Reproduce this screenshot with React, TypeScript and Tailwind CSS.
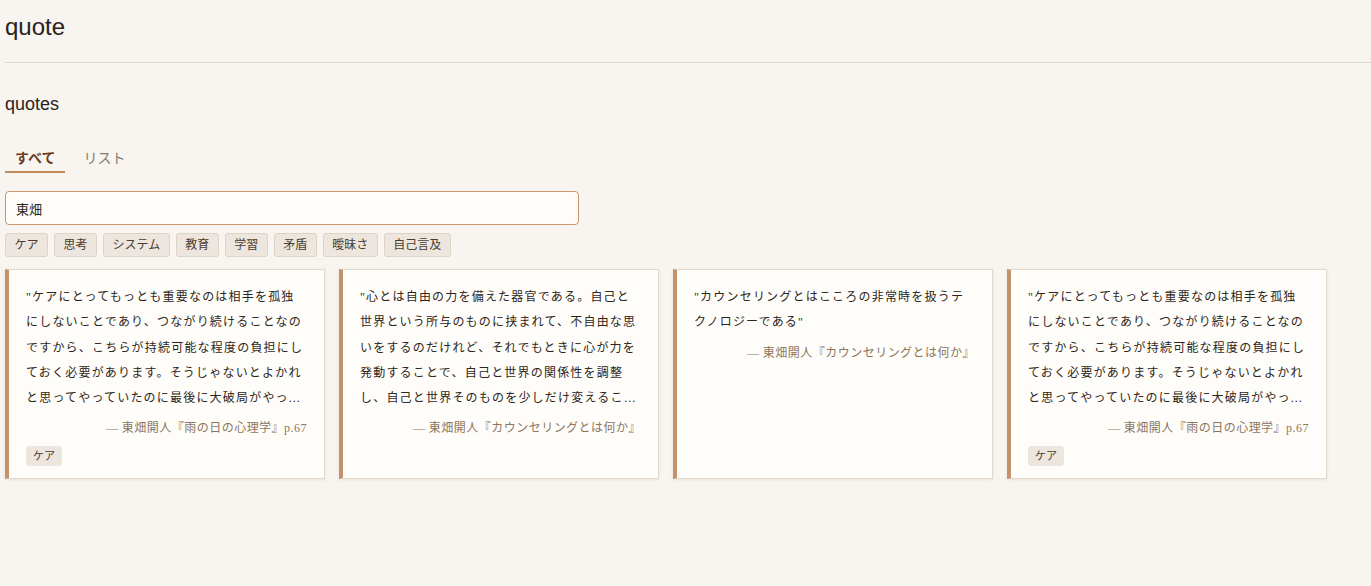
import { useState } from "react";

interface Quote {
  id: number;
  text: string;
  source: string;
  tags: string[];
}

const QUOTES: Quote[] = [
  {
    id: 1,
    text: "ケアにとってもっとも重要なのは相手を孤独にしないことであり、つながり続けることなのですから、こちらが持続可能な程度の負担にしておく必要があります。そうじゃないとよかれと思ってやっていたのに最後に大破局がやってきてしまうからです。",
    source: "— 東畑開人『雨の日の心理学』p.67",
    tags: ["ケア"],
  },
  {
    id: 2,
    text: "心とは自由の力を備えた器官である。自己と世界という所与のものに挟まれて、不自由な思いをするのだけれど、それでもときに心が力を発動することで、自己と世界の関係性を調整し、自己と世界そのものを少しだけ変えることができる。",
    source: "— 東畑開人『カウンセリングとは何か』",
    tags: [],
  },
  {
    id: 3,
    text: "カウンセリングとはこころの非常時を扱うテクノロジーである",
    source: "— 東畑開人『カウンセリングとは何か』",
    tags: [],
  },
  {
    id: 4,
    text: "ケアにとってもっとも重要なのは相手を孤独にしないことであり、つながり続けることなのですから、こちらが持続可能な程度の負担にしておく必要があります。そうじゃないとよかれと思ってやっていたのに最後に大破局がやってきてしまうからです。",
    source: "— 東畑開人『雨の日の心理学』p.67",
    tags: ["ケア"],
  },
];

const TAGS = ["ケア", "思考", "システム", "教育", "学習", "矛盾", "曖昧さ", "自己言及"];

function QuoteCard({ quote }: { quote: Quote }) {
  return (
    <div className="bg-[#fffdf9] border border-[#e2d8cb] border-l-4 border-l-[#c4916a] pl-[17px] pr-[17px] pt-[15px] pb-[12px] shadow-[0_1px_3px_rgba(120,90,60,0.12)]">
      <p className="text-[12px] leading-[25.3px] tracking-[0.1em] text-[#2d2520] line-clamp-5">
        "{quote.text}"
      </p>
      <p className="mt-[8px] text-right text-[12px] leading-[18px] tracking-[0.04em] text-[#8c7660]">
        {quote.source}
      </p>
      {quote.tags.length > 0 && (
        <div className="mt-[9px] flex gap-1.5">
          {quote.tags.map((t) => (
            <span
              key={t}
              className="px-[7px] py-[2px] text-[11px] leading-4 rounded-[3px] bg-[#ece6de] text-[#4a3c30]"
            >
              {t}
            </span>
          ))}
        </div>
      )}
    </div>
  );
}

export default function App() {
  const [tab, setTab] = useState("all");
  const [query, setQuery] = useState("東畑");

  return (
    <div className="min-h-screen bg-[#f8f5f0] text-[#2a211c] [font-family:'Liberation_Serif','Noto_Sans_CJK_JP',serif]">
      {/* Header */}
      <div className="pl-[5px] pt-[11px]">
        <h1 className="text-[24px] leading-8 [font-family:'Liberation_Sans',Arial,sans-serif]">quote</h1>
        <div className="mt-[19px] border-b border-[#e5d8cb]"></div>
      </div>

      <div className="pl-[5px]">
        <h2 className="mt-[27px] text-[18px] leading-7 [font-family:'Liberation_Sans',Arial,sans-serif]">
          quotes
        </h2>

        {/* Tabs */}
        <div className="mt-[23px] flex gap-2">
          <button
            onClick={() => setTab("all")}
            className={
              tab === "all"
                ? "px-[10px] pt-2 pb-[2px] text-[14px] leading-5 font-bold text-[#6b3f1f] border-b-2 border-[#c28b5c]"
                : "px-[10px] pt-2 pb-[2px] text-[14px] leading-5 text-[#857a71] border-b-2 border-transparent"
            }
          >
            すべて
          </button>
          <button
            onClick={() => setTab("list")}
            className={
              tab === "list"
                ? "px-[10px] pt-2 pb-[2px] text-[14px] leading-5 font-bold text-[#6b3f1f] border-b-2 border-[#c28b5c]"
                : "px-[10px] pt-2 pb-[2px] text-[14px] leading-5 text-[#857a71] border-b-2 border-transparent"
            }
          >
            リスト
          </button>
        </div>

        {/* Search */}
        <input
          autoFocus
          value={query}
          onChange={(e) => setQuery(e.target.value)}
          className="mt-[18px] block w-[574px] h-[34px] px-[10px] bg-[#fffdf9] border border-[#c9966b] rounded-[4px] text-[13px] text-[#2d2520] outline-none caret-[#2d2520] [font-family:'Noto_Sans_CJK_JP',sans-serif]"
        />

        {/* Tag filters */}
        <div className="mt-2 flex gap-1.5">
          {TAGS.map((t) => (
            <span
              key={t}
              className="px-[8.5px] py-[3px] text-[12px] leading-4 rounded-[3px] bg-[#ece6de] border border-[#ddd3c6] text-[#4a3c30]"
            >
              {t}
            </span>
          ))}
        </div>

        {/* Cards */}
        <div className="mt-3 grid grid-cols-[repeat(4,320px)] gap-[14px]">
          {QUOTES.map((q) => (
            <QuoteCard key={q.id} quote={q} />
          ))}
        </div>
      </div>
    </div>
  );
}
